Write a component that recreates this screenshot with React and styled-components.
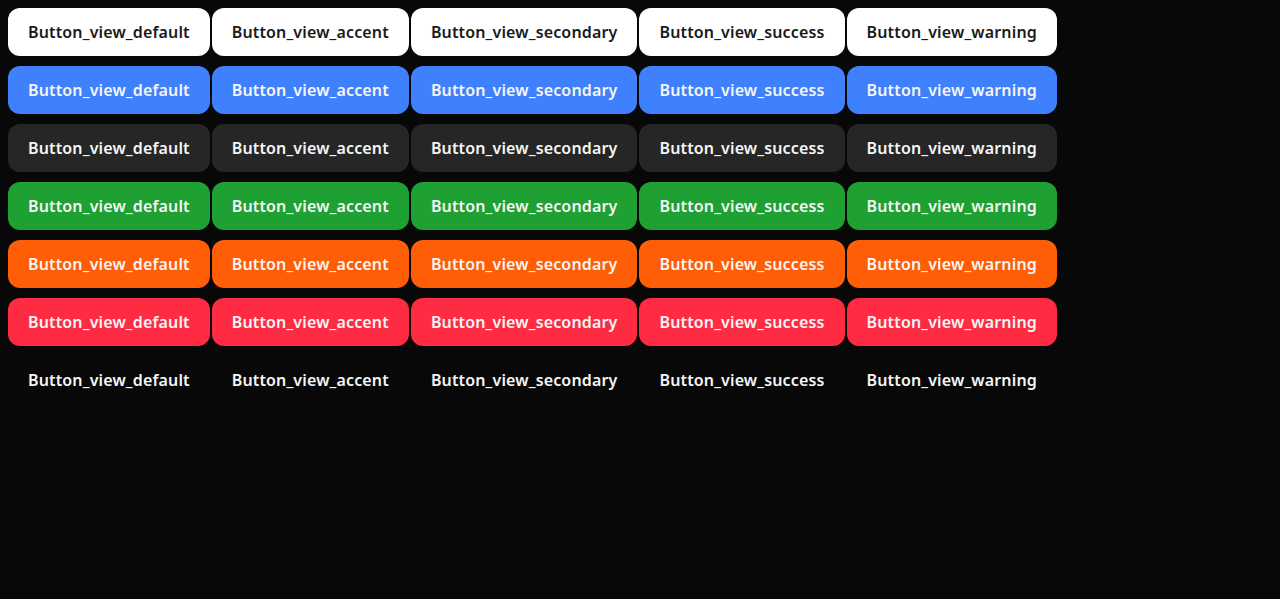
import React from "react";
import styled, { createGlobalStyle } from "styled-components";

const GlobalStyle = createGlobalStyle`
  html, body {
    margin: 0;
    background: #080808;
  }
  body {
    padding: 8px;
    font-family: "Noto Sans", "Liberation Sans", sans-serif;
  }
`;

const palette = {
  white: { bg: "#ffffff", fg: "#1a1a1a" },
  blue: { bg: "#3f81fd", fg: "#f5f5f5" },
  dark: { bg: "#262626", fg: "#f5f5f5" },
  green: { bg: "#1fa033", fg: "#f5f5f5" },
  orange: { bg: "#ff5d06", fg: "#f5f5f5" },
  red: { bg: "#ff2b43", fg: "#f5f5f5" },
  clear: { bg: "transparent", fg: "#f5f5f5" },
};

const Grid = styled.div`
  display: flex;
  flex-direction: column;
  gap: 10px;
`;

const Row = styled.div`
  display: flex;
  gap: 2px;
`;

const Button = styled.button`
  height: 48px;
  padding: 0 20px;
  border: none;
  border-radius: 12px;
  background: ${(p) => palette[p.$tone].bg};
  color: ${(p) => palette[p.$tone].fg};
  font-family: inherit;
  font-size: 16px;
  font-weight: 600;
  letter-spacing: 0.15px;
  white-space: nowrap;
  cursor: pointer;
`;

const labels = [
  "Button_view_default",
  "Button_view_accent",
  "Button_view_secondary",
  "Button_view_success",
  "Button_view_warning",
];

const tones = ["white", "blue", "dark", "green", "orange", "red", "clear"];

export default function App() {
  return (
    <>
      <GlobalStyle />
      <Grid>
        {tones.map((tone) => (
          <Row key={tone}>
            {labels.map((label) => (
              <Button key={label} $tone={tone}>
                {label}
              </Button>
            ))}
          </Row>
        ))}
      </Grid>
    </>
  );
}
